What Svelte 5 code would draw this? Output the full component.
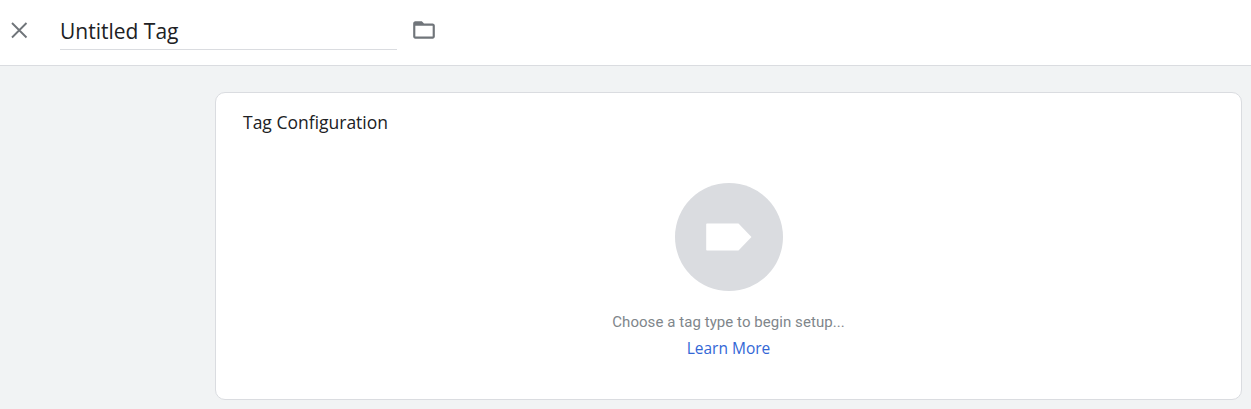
<script lang="ts">
  const title = 'Untitled Tag';
</script>

<div class="page">
  <!-- Header -->
  <header class="top">
    <button class="close" aria-label="Close">
      <svg width="24" height="24" viewBox="0 0 24 24" fill="none">
        <path d="M5 5L19.5 19.5M19.5 5L5 19.5" stroke="#70757a" stroke-width="1.9"/>
      </svg>
    </button>
    <div class="name">{title}</div>
    <button class="folder" aria-label="Choose folder">
      <svg width="26" height="26" viewBox="0 0 24 24" fill="none">
        <path d="M20 6h-8l-2-2H4c-1.1 0-1.99.9-1.99 2L2 18c0 1.1.9 2 2 2h16c1.1 0 2-.9 2-2V8c0-1.1-.9-2-2-2zm0 12H4V8h16v10z" fill="#70757a"/>
      </svg>
    </button>
  </header>

  <!-- Card -->
  <main class="body">
    <section class="card">
      <h2>Tag Configuration</h2>
      <div class="empty">
        <div class="circle">
          <svg width="46" height="28" viewBox="0 0 46 28" fill="none">
            <path d="M1 0.5H32.5L45.5 14 32.5 27.5H1a.8.8 0 0 1-.8-.8V1.3A.8.8 0 0 1 1 .5z" fill="#fff"/>
          </svg>
        </div>
        <p class="hint">Choose a tag type to begin setup...</p>
        <span class="learn">Learn More</span>
      </div>
    </section>
  </main>
</div>

<style>
  :global(body) {
    margin: 0;
    background: #f1f3f4;
  }

  .page {
    height: 409px;
    overflow: hidden;
    background: #f1f3f4;
  }

  /* ── Header ── */
  .top {
    display: flex;
    align-items: flex-start;
    height: 65px;
    background: #fff;
    border-bottom: 1px solid #dadce0;
  }

  .close,
  .folder {
    display: flex;
    padding: 0;
    border: 0;
    background: none;
  }

  .close {
    margin: 18px 0 0 7px;
  }

  .folder {
    margin: 17px 0 0 14px;
  }

  .name {
    box-sizing: border-box;
    width: 337px;
    height: 50px;
    margin-left: 29px;
    padding-top: 16px;
    border-bottom: 1px solid #dadce0;
    font-family: "Open Sans", sans-serif;
    font-size: 21px;
    line-height: 30px;
    color: #202124;
  }

  /* ── Card ── */
  .body {
    padding: 26px 9px 0 215px;
  }

  .card {
    box-sizing: border-box;
    height: 308px;
    padding: 18px 27px 0;
    background: #fff;
    border: 1px solid #dadce0;
    border-radius: 10px;
  }

  h2 {
    margin: 0;
    font-family: "Open Sans", sans-serif;
    font-size: 17.5px;
    font-weight: 400;
    line-height: 22px;
    color: #202124;
  }

  .empty {
    display: flex;
    flex-direction: column;
    align-items: center;
    margin-top: 50px;
  }

  .circle {
    display: flex;
    align-items: center;
    justify-content: center;
    width: 108px;
    height: 108px;
    border-radius: 50%;
    background: #dadce0;
  }

  .hint {
    margin: 22px 0 0;
    font-family: Roboto, sans-serif;
    font-size: 15px;
    letter-spacing: 0.06px;
    line-height: 18px;
    color: #80868b;
  }

  .learn {
    margin-top: 8px;
    font-family: "Open Sans", sans-serif;
    font-size: 15.5px;
    font-weight: 500;
    line-height: 18px;
    color: #3367d6;
  }
</style>
